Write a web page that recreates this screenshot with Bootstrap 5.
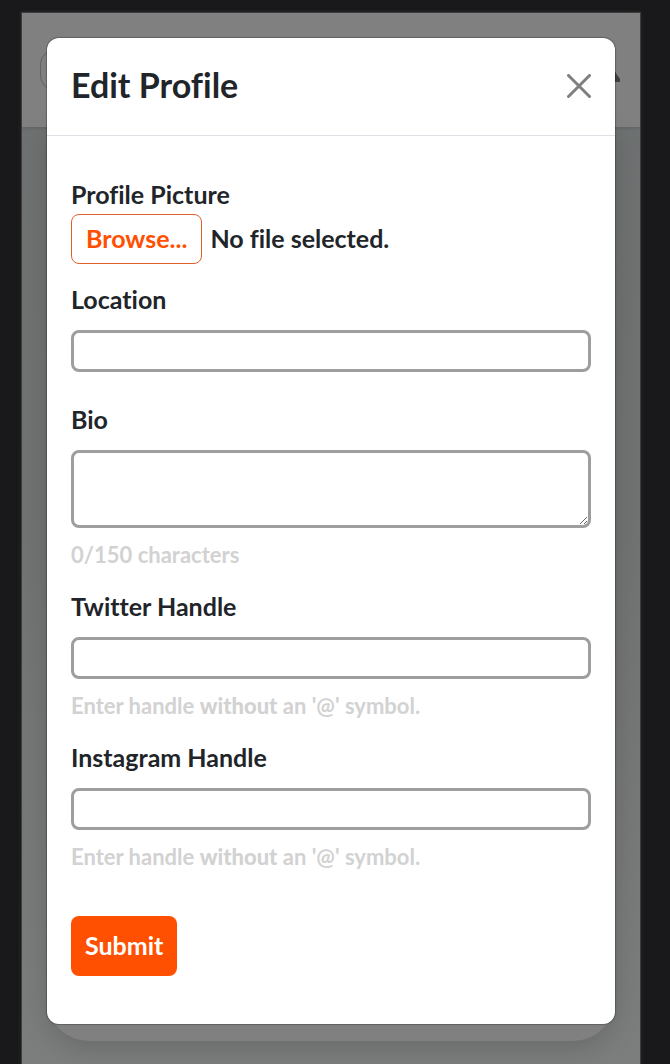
<!DOCTYPE html>
<html lang="en">
<head>
<meta charset="utf-8">
<meta name="viewport" content="width=device-width, initial-scale=1">
<title>Edit Profile</title>
<link href="https://cdn.jsdelivr.net/npm/bootstrap@5.3.0/dist/css/bootstrap.min.css" rel="stylesheet">
<style>
  body { background: #19191b; color: #212529; font-family: Lato, "Liberation Sans", sans-serif; font-size: 25px; font-weight: 700; font-variant-ligatures: none; }
  .app-frame { margin: 12px 29px 0 21px; border: 1px solid #3c3c3d; border-bottom: 0; min-height: calc(100vh - 12px); display: grid; box-shadow: 0 0 4px #29292b; }
  /* the dimmed page and the dialog share one grid cell */
  .app-frame > * { grid-area: 1 / 1; min-width: 0; }
  .backdrop-page { background: linear-gradient(#6e7171, #717372 50%, #7c7e7d); overflow: hidden; }
  .top-bar { height: 114px; background: #808080; box-shadow: 0 1px 4px rgba(0,0,0,.15); padding: 0 20px 0 18px; }
  .search-pill { width: 60px; height: 40px; border: 1px solid #626262; border-radius: 14px; }
  .profile-panel { background: #808080; margin: 0 25px 23px; border-radius: 0 0 42px 42px; box-shadow: 0 8px 28px rgba(0,0,0,.15); }
  .dialog-box { margin: 25px 25px 40px; border-radius: 12px; box-shadow: 0 0 1px 1px rgba(0,0,0,.25); z-index: 1; }
  .dialog-head { height: 98px; padding: 0 24px 2px; border-bottom: 1px solid #dee2e6; }
  .dialog-title { font-size: 34px; font-weight: 700; line-height: 48px; padding-bottom: 2px; }
  .close-x { line-height: 0; color: #7f7f7f; }
  .dialog-main { padding: 40px 24px 48px; }
  .field-label { display: block; line-height: 36px; margin-bottom: 13px; }
  .field-label.tight { margin-bottom: 2px; }
  .file-row { margin-bottom: 17px; }
  .file-row span { line-height: 36px; padding-bottom: 2px; }
  .field-box { border: 3px solid #9e9e9e; border-radius: 8px; height: 42px; font-size: 20px; }
  .field-box.spaced { margin-bottom: 29px; }
  textarea.field-box { height: 78px; }
  .field-note { color: #d2d2d2; font-size: 22px; line-height: 33px; margin: 10px 0 17px; }
  .field-note strong { font-family: "Lato Black", Lato, sans-serif; font-weight: 900; }
  .btn-browse { --bs-btn-color: #ff4f00; --bs-btn-border-color: #e0602c; --bs-btn-hover-bg: #ff4f00; --bs-btn-hover-color: #fff; height: 50px; }
  .btn-send { --bs-btn-bg: #ff4f00; --bs-btn-color: #fff; --bs-btn-hover-bg: #e64700; --bs-btn-hover-color: #fff; height: 60px; margin-top: 26px; }
  .btn-browse, .btn-send { border-radius: 8px; font-size: 25px; font-weight: 700; line-height: 36px; padding: 0 14px 2px; }
</style>
</head>
<body>
<div class="app-frame">
  <div class="backdrop-page d-flex flex-column" aria-hidden="true">
    <div class="top-bar d-flex align-items-center justify-content-between flex-shrink-0">
      <div class="search-pill"></div>
      <svg width="28" height="28" viewBox="0 0 28 28" fill="#3f3f3f"><path d="M14 2c6 0 8 4 8 9 0 5 5 10 6 12 1 2 0 3-2 3H2c-2 0-3-1-2-3 1-2 6-7 6-12 0-5 2-9 8-9z"/></svg>
    </div>
    <div class="profile-panel flex-grow-1"></div>
  </div>

  <div class="dialog-box bg-white align-self-start" role="dialog" aria-labelledby="dialogTitle">
    <div class="dialog-head d-flex align-items-center justify-content-between">
      <h1 class="dialog-title m-0" id="dialogTitle">Edit Profile</h1>
      <button type="button" class="close-x btn p-0 border-0" aria-label="Close">
        <svg width="24" height="24" viewBox="0 0 24 24" fill="none" stroke="#7f7f7f" stroke-width="3" stroke-linecap="round"><path d="M1.5 1.5l21 21M22.5 1.5l-21 21"/></svg>
      </button>
    </div>
    <form class="dialog-main">
      <label class="field-label tight" for="picture">Profile Picture</label>
      <div class="file-row d-flex align-items-center gap-2">
        <button type="button" class="btn btn-browse" onclick="document.getElementById('picture').click()">Browse...</button>
        <span>No file selected.</span>
        <input type="file" id="picture" class="d-none">
      </div>

      <label class="field-label" for="location">Location</label>
      <input type="text" id="location" class="field-box spaced form-control">

      <label class="field-label" for="bio">Bio</label>
      <textarea id="bio" class="field-box form-control" maxlength="150"></textarea>
      <p class="field-note">0/150 characters</p>

      <label class="field-label" for="twitter">Twitter Handle</label>
      <input type="text" id="twitter" class="field-box form-control">
      <p class="field-note">Enter handle <strong>without</strong> an '@' symbol.</p>

      <label class="field-label" for="instagram">Instagram Handle</label>
      <input type="text" id="instagram" class="field-box form-control">
      <p class="field-note">Enter handle <strong>without</strong> an '@' symbol.</p>

      <button type="submit" class="btn btn-send border-0">Submit</button>
    </form>
  </div>
</div>
<script src="https://cdn.jsdelivr.net/npm/bootstrap@5.3.0/dist/js/bootstrap.bundle.min.js"></script>
</body>
</html>
